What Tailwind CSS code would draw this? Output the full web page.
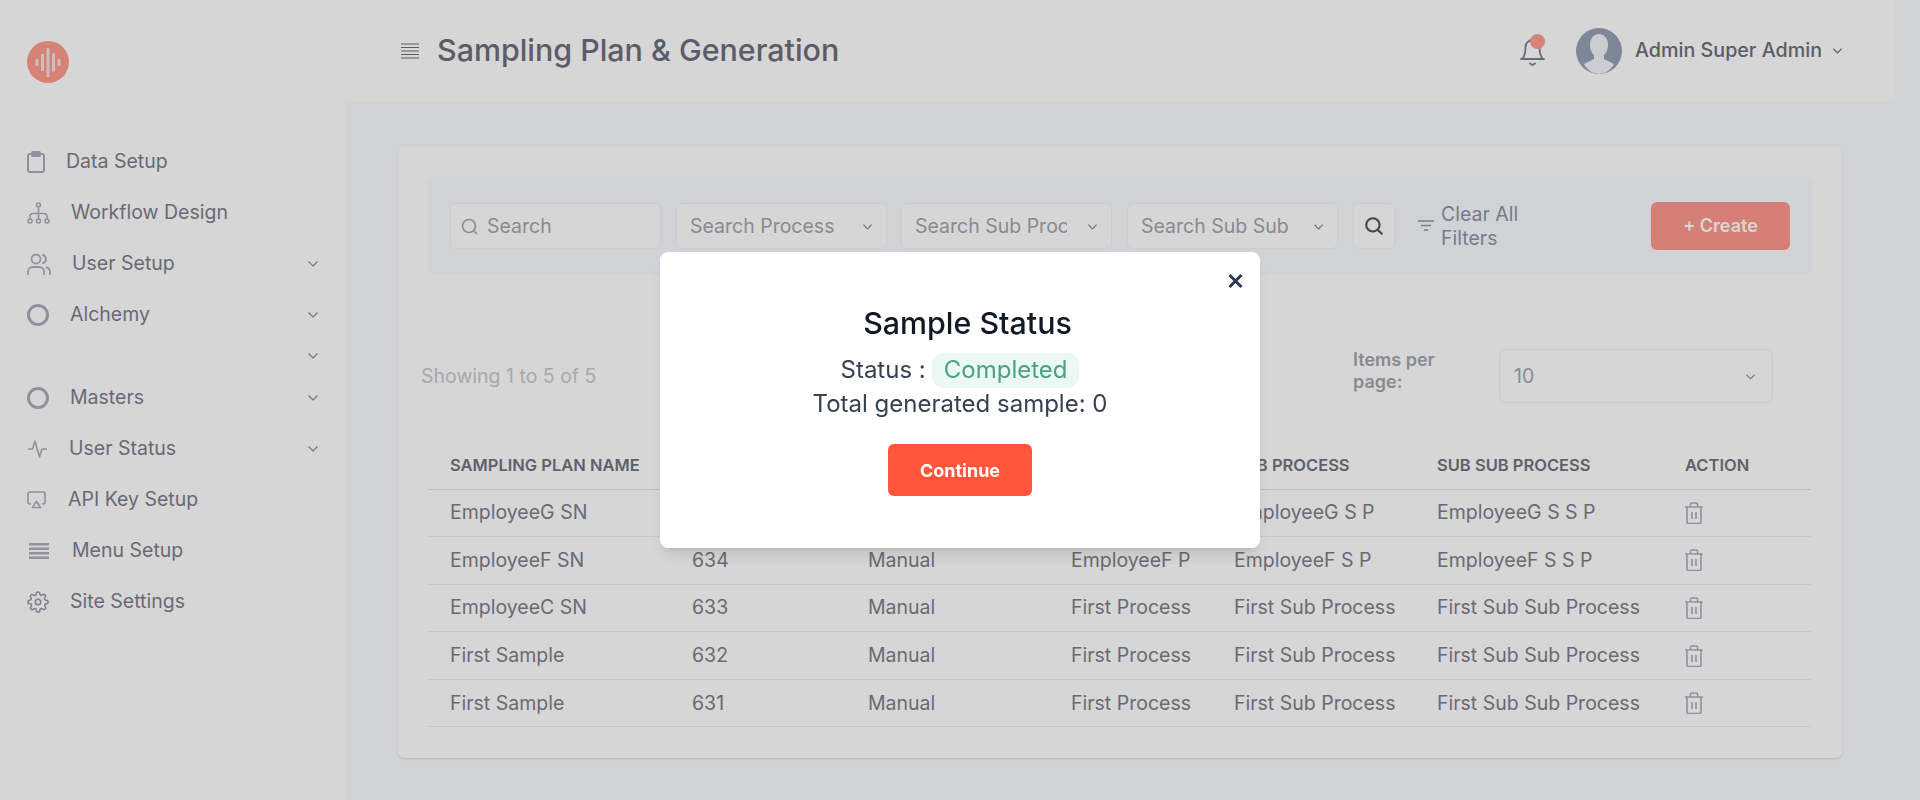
<!DOCTYPE html>
<html lang="en">
<head>
    <meta charset="UTF-8">
    <meta name="viewport" content="width=device-width, initial-scale=1.0">
    <title>Sampling Plan &amp; Generation</title>
    <script src="https://cdn.jsdelivr.net/npm/@tailwindcss/browser@4"></script>
</head>
<body class="font-[Inter,sans-serif] bg-[#f9fbff] h-screen overflow-hidden">

    <div class="flex h-[800px]">
        <!-- sidebar -->
        <aside class="w-[345px] shrink-0 bg-white pt-[41px] pl-[27px] pr-[27px] text-[19.5px] text-[#7e7e8c]">
            <div class="w-[42px] h-[42px] rounded-full bg-[#ff9b8d] flex items-center justify-center mb-[53px]">
                <svg width="26" height="29" viewBox="0 0 26 29" fill="none" stroke="#f2e4e0" stroke-width="3"><path d="M2 11v7M7.500 6v17M13 0v29M18.500 5.500v18M24 11v7"/></svg>
            </div>
            <nav>
                <a class="flex items-center gap-[21px] h-[51px]">
                    <svg class="shrink-0" width="18" height="22" viewBox="0 0 18 22" fill="none" stroke="#aeacbe" stroke-width="2" stroke-linejoin="round"><rect x="1" y="3" width="16" height="18" rx="2"/><rect x="5" y="1" width="8" height="4" rx="1"/></svg>
                    <span>Data Setup</span>
                </a>
                <a class="flex items-center gap-[21px] h-[51px]">
                    <svg class="shrink-0" width="23" height="22" viewBox="0 0 23 22" fill="none" stroke="#aeacbe" stroke-width="1.6"><circle cx="11.500" cy="3" r="2"/><circle cx="3" cy="19" r="2"/><circle cx="11.500" cy="19" r="2"/><circle cx="20" cy="19" r="2"/><path d="M11.500 5v12M3 17v-2.500a3 3 0 0 1 3-3h11a3 3 0 0 1 3 3V17"/></svg>
                    <span>Workflow Design</span>
                </a>
                <a class="flex items-center gap-[21px] h-[51px]">
                    <svg class="shrink-0" width="24" height="22" viewBox="0 0 24 22" fill="none" stroke="#aeacbe" stroke-width="1.8" stroke-linecap="round"><circle cx="9" cy="6" r="4.500"/><path d="M1 21v-2a5 5 0 0 1 5-5h6a5 5 0 0 1 5 5v2M16 1.800a4.500 4.500 0 0 1 0 8.400M19.500 14.300a5 5 0 0 1 3.500 4.700v2"/></svg>
                    <span>User Setup</span>
                    <svg class="ml-auto" width="10" height="6" viewBox="0 0 10 6" fill="none" stroke="#8a8a98" stroke-width="1.2"><path d="M.5.5 5 5 9.500.5"/></svg>
                </a>
                <a class="flex items-center gap-[21px] h-[51px]">
                    <svg class="shrink-0" width="22" height="22" viewBox="0 0 22 22" fill="none" stroke="#aeacbe" stroke-width="3"><circle cx="11" cy="11" r="9.500"/></svg>
                    <span>Alchemy</span>
                    <svg class="ml-auto" width="10" height="6" viewBox="0 0 10 6" fill="none" stroke="#8a8a98" stroke-width="1.2"><path d="M.5.5 5 5 9.500.5"/></svg>
                </a>
                <div class="flex items-center h-[32px]">
                    <svg class="ml-auto" width="10" height="6" viewBox="0 0 10 6" fill="none" stroke="#8a8a98" stroke-width="1.2"><path d="M.5.5 5 5 9.500.5"/></svg>
                </div>
                <a class="flex items-center gap-[21px] h-[51px]">
                    <svg class="shrink-0" width="22" height="22" viewBox="0 0 22 22" fill="none" stroke="#aeacbe" stroke-width="3"><circle cx="11" cy="11" r="9.500"/></svg>
                    <span>Masters</span>
                    <svg class="ml-auto" width="10" height="6" viewBox="0 0 10 6" fill="none" stroke="#8a8a98" stroke-width="1.2"><path d="M.5.5 5 5 9.500.5"/></svg>
                </a>
                <a class="flex items-center gap-[22px] h-[51px]">
                    <svg class="shrink-0 ml-[1px]" width="19" height="18" viewBox="0 0 19 18" fill="none" stroke="#aeacbe" stroke-width="1.600" stroke-linejoin="round"><path d="M0 9h4.500L7 1l4.500 16L14 9h5"/></svg>
                    <span>User Status</span>
                    <svg class="ml-auto" width="10" height="6" viewBox="0 0 10 6" fill="none" stroke="#8a8a98" stroke-width="1.2"><path d="M.5.5 5 5 9.500.5"/></svg>
                </a>
                <a class="flex items-center gap-[22px] h-[51px]">
                    <svg class="shrink-0" width="19" height="18" viewBox="0 0 19 18" fill="none" stroke="#aeacbe" stroke-width="1.600" stroke-linejoin="round"><path d="M4 13H3a2 2 0 0 1-2-2V3a2 2 0 0 1 2-2h13a2 2 0 0 1 2 2v8a2 2 0 0 1-2 2h-1"/><path d="m9.500 10.500 4 6h-8z"/></svg>
                    <span>API Key Setup</span>
                </a>
                <a class="flex items-center gap-[23px] h-[51px]">
                    <svg class="shrink-0 ml-[2px]" width="20" height="16" viewBox="0 0 20 16" fill="none" stroke="#aeacbe" stroke-width="2.400"><path d="M0 1.200h20M0 5.700h20M0 10.200h20M0 14.800h20"/></svg>
                    <span>Menu Setup</span>
                </a>
                <a class="flex items-center gap-[21px] h-[51px]">
                    <svg class="shrink-0" width="22" height="22" viewBox="0 0 24 24" fill="none" stroke="#9a98a8" stroke-width="1.700" stroke-linecap="round" stroke-linejoin="round"><circle cx="12" cy="12" r="3"/><path d="M19.400 15a1.650 1.650 0 0 0 .33 1.820l.06.06a2 2 0 1 1-2.830 2.830l-.06-.06a1.650 1.650 0 0 0-2.820 1.170V21a2 2 0 1 1-4 0v-.09A1.650 1.650 0 0 0 7.260 19.700l-.06.06a2 2 0 1 1-2.830-2.830l.06-.06A1.650 1.650 0 0 0 3.260 14H3a2 2 0 1 1 0-4h.09A1.650 1.650 0 0 0 4.300 7.260l-.06-.06a2 2 0 1 1 2.830-2.830l.06.06A1.650 1.650 0 0 0 10 3.260V3a2 2 0 1 1 4 0v.09a1.650 1.650 0 0 0 2.800 1.170l.06-.06a2 2 0 1 1 2.830 2.830l-.06.06A1.650 1.650 0 0 0 20.740 10H21a2 2 0 1 1 0 4h-.09a1.650 1.650 0 0 0-1.510 1z"/></svg>
                    <span>Site Settings</span>
                </a>
            </nav>
        </aside>

        <div class="flex-1 min-w-0">
            <!-- header -->
            <header class="h-[101px] w-[1550px] bg-white flex items-center pl-[56px] pr-[53px]">
                <svg class="mr-[18px]" width="18" height="16" viewBox="0 0 18 16" fill="none" stroke="#6e6e7c" stroke-width="1.200"><path d="M0 1h18M0 4.500h18M0 8h18M0 11.500h18M0 15h18"/></svg>
                <h1 class="text-[30.4px] font-medium text-[#6e6e7c]">Sampling Plan &amp; Generation</h1>
                <div class="ml-auto relative w-[25px] h-[31px] mr-[31px]">
                    <svg width="25" height="31" viewBox="0 0 25 31" fill="none" stroke="#7f7f8a" stroke-width="1.800" stroke-linecap="round"><path d="M3 23c2-3 2.500-6 2.500-11a7 7 0 0 1 14 0c0 5 .5 8 2.500 11M1 24h23M10 28.500l2.500 1.500 2.500-1.500"/></svg>
                    <span class="absolute left-[10px] -top-[1px] w-[15px] h-[15px] rounded-full bg-[#ff9b8d]"></span>
                </div>
                <svg class="rounded-full mr-[13px]" width="46" height="46" viewBox="0 0 46 46"><rect width="46" height="46" fill="#98a0b6"/><path d="M23 6c-6 0-9 5-9 11 0 4 1.500 8 4 10v4l-10 5c3 6 9 10 15 10s12-4 15-10l-10-5v-4c2.500-2 4-6 4-10 0-6-3-11-9-11z" fill="#f2f4f6"/></svg>
                <span class="text-[19.7px] font-medium text-[#6e6e7c]">Admin Super Admin</span>
                <svg class="ml-[11px]" width="9" height="6" viewBox="0 0 10 6" fill="none" stroke="#6e6e7c" stroke-width="1.300"><path d="M.5.5 5 5 9.500.5"/></svg>
            </header>

            <!-- card -->
            <main class="ml-[53px] mr-[78px] mt-[45px] h-[612px] bg-white rounded-md shadow-sm px-[30px] pt-[30px]">
                <div class="h-[99px] bg-[#f9fbff] rounded-md flex items-center pl-[22px] pr-[22px] text-[19.5px]">
                    <div class="relative w-[211px] h-[46px] shrink-0">
                        <svg class="absolute left-[11px] top-[15px]" width="17" height="17" viewBox="0 0 17 17" fill="none" stroke="#a8a8ae" stroke-width="1.700"><circle cx="8" cy="8" r="6.500"/><path d="m12.500 12.500 3.500 3.500"/></svg>
                        <input placeholder="Search" class="w-full h-full bg-white border border-[#f4f4f6] rounded-md pl-[36px] placeholder:text-[#a4a5ae] outline-none">
                    </div>
                    <div class="relative w-[211px] h-[46px] shrink-0 ml-[15px]">
                        <input placeholder="Search Process" class="w-full h-full bg-white border border-[#f4f4f6] rounded-md pl-[13px] pr-[44px] placeholder:text-[#a4a5ae] outline-none">
                        <svg class="absolute right-[15px] top-[21px]" width="9" height="6" viewBox="0 0 10 6" fill="none" stroke="#8a8a98" stroke-width="1.300"><path d="M.5.5 5 5 9.500.5"/></svg>
                    </div>
                    <div class="relative w-[211px] h-[46px] shrink-0 ml-[14px]">
                        <input placeholder="Search Sub Process" class="w-full h-full bg-white border border-[#f4f4f6] rounded-md pl-[13px] pr-[44px] placeholder:text-[#a4a5ae] outline-none">
                        <svg class="absolute right-[15px] top-[21px]" width="9" height="6" viewBox="0 0 10 6" fill="none" stroke="#8a8a98" stroke-width="1.300"><path d="M.5.5 5 5 9.500.5"/></svg>
                    </div>
                    <div class="relative w-[211px] h-[46px] shrink-0 ml-[15px]">
                        <input placeholder="Search Sub Sub Process" class="w-full h-full bg-white border border-[#f4f4f6] rounded-md pl-[13px] pr-[44px] placeholder:text-[#a4a5ae] outline-none">
                        <svg class="absolute right-[15px] top-[21px]" width="9" height="6" viewBox="0 0 10 6" fill="none" stroke="#8a8a98" stroke-width="1.300"><path d="M.5.5 5 5 9.500.5"/></svg>
                    </div>
                    <button class="w-[42px] h-[46px] shrink-0 ml-[15px] bg-white border border-[#f4f4f6] rounded-md flex items-center justify-center">
                        <svg width="20" height="20" viewBox="0 0 18 18" fill="none" stroke="#4b5563" stroke-width="1.900"><circle cx="8" cy="8" r="6"/><path d="m12.500 12.500 4 4"/></svg>
                    </button>
                    <svg class="ml-[23px] shrink-0" width="16" height="11" viewBox="0 0 16 11" fill="none" stroke="#8b93a8" stroke-width="1.600"><path d="M0 1h16M3 5.500h10M6 10h4"/></svg>
                    <span class="ml-[7px] w-[100px] leading-[24px] text-[#8b93a8]">Clear All Filters</span>
                    <button class="ml-auto w-[139px] h-[48px] bg-[#ff988d] rounded-md text-[18px] font-semibold text-white">+ Create</button>
                </div>

                <div class="flex items-center h-[54px] mt-[74px] -ml-[7px]">
                    <span class="w-[932px] pt-[2px] text-[19.5px] text-[#c9c9cf]">Showing 1 to 5 of 5</span>
                    <span class="w-[146px] pb-[10px] text-[18px] font-semibold leading-[22px] text-[#a4a5ae] pr-[50px]">Items per page:</span>
                    <div class="relative w-[274px] h-[54px] bg-white border border-[#f4f4f6] rounded-md flex items-center pl-[14px] pt-[2px] text-[19.5px] text-[#a4a5ae]">
                        10
                        <svg class="absolute right-[17px] top-[24px]" width="9" height="6" viewBox="0 0 10 6" fill="none" stroke="#8a8a98" stroke-width="1.200"><path d="M.5.5 5 5 9.500.5"/></svg>
                    </div>
                </div>

                <table class="mt-[38px] w-[1383px] table-fixed text-left text-[19.5px] text-[#7e7e8c]">
                    <colgroup>
                        <col class="w-[242px]"><col class="w-[176px]"><col class="w-[203px]"><col class="w-[163px]"><col class="w-[203px]"><col class="w-[248px]"><col>
                    </colgroup>
                    <thead class="text-[16.5px] uppercase text-[#73737f]">
                        <tr class="h-[48px] border-b border-[#dfe1e5]">
                            <th class="pl-[22px] pt-[1px] font-semibold">Sampling Plan Name</th>
                            <th class="pl-[22px] pt-[1px] font-semibold">Sample ID</th>
                            <th class="pl-[22px] pt-[1px] font-semibold">Type</th>
                            <th class="pl-[22px] pt-[1px] font-semibold">Process</th>
                            <th class="pl-[22px] pt-[1px] font-semibold">Sub Process</th>
                            <th class="pl-[22px] pt-[1px] font-semibold">Sub Sub Process</th>
                            <th class="pl-[22px] pt-[1px] font-semibold">Action</th>
                        </tr>
                    </thead>
                    <tbody>
                        <tr class="h-[47.6px] border-b border-[#eceef2]">
                            <td class="pl-[22px]">EmployeeG SN</td><td class="pl-[22px]">635</td><td class="pl-[22px]">Manual</td><td class="pl-[22px]">EmployeeG P</td><td class="pl-[22px]">EmployeeG S P</td><td class="pl-[22px]">EmployeeG S S P</td>
                            <td class="pl-[22px]"><svg width="18" height="22" viewBox="0 0 18 22" fill="none" stroke="#aeacbe" stroke-width="1.600" stroke-linejoin="round"><path d="M0 5h18M2 5v15a1.500 1.500 0 0 0 1.500 1.500h11A1.500 1.500 0 0 0 16 20V5M5.500 5V2a1 1 0 0 1 1-1h5a1 1 0 0 1 1 1v3M7 10v7M11 10v7"/></svg></td>
                        </tr>
                        <tr class="h-[47.6px] border-b border-[#eceef2]">
                            <td class="pl-[22px]">EmployeeF SN</td><td class="pl-[22px]">634</td><td class="pl-[22px]">Manual</td><td class="pl-[22px]">EmployeeF P</td><td class="pl-[22px]">EmployeeF S P</td><td class="pl-[22px]">EmployeeF S S P</td>
                            <td class="pl-[22px]"><svg width="18" height="22" viewBox="0 0 18 22" fill="none" stroke="#aeacbe" stroke-width="1.600" stroke-linejoin="round"><path d="M0 5h18M2 5v15a1.500 1.500 0 0 0 1.500 1.500h11A1.500 1.500 0 0 0 16 20V5M5.500 5V2a1 1 0 0 1 1-1h5a1 1 0 0 1 1 1v3M7 10v7M11 10v7"/></svg></td>
                        </tr>
                        <tr class="h-[47.6px] border-b border-[#eceef2]">
                            <td class="pl-[22px]">EmployeeC SN</td><td class="pl-[22px]">633</td><td class="pl-[22px]">Manual</td><td class="pl-[22px]">First Process</td><td class="pl-[22px]">First Sub Process</td><td class="pl-[22px]">First Sub Sub Process</td>
                            <td class="pl-[22px]"><svg width="18" height="22" viewBox="0 0 18 22" fill="none" stroke="#aeacbe" stroke-width="1.600" stroke-linejoin="round"><path d="M0 5h18M2 5v15a1.500 1.500 0 0 0 1.500 1.500h11A1.500 1.500 0 0 0 16 20V5M5.500 5V2a1 1 0 0 1 1-1h5a1 1 0 0 1 1 1v3M7 10v7M11 10v7"/></svg></td>
                        </tr>
                        <tr class="h-[47.6px] border-b border-[#eceef2]">
                            <td class="pl-[22px]">First Sample</td><td class="pl-[22px]">632</td><td class="pl-[22px]">Manual</td><td class="pl-[22px]">First Process</td><td class="pl-[22px]">First Sub Process</td><td class="pl-[22px]">First Sub Sub Process</td>
                            <td class="pl-[22px]"><svg width="18" height="22" viewBox="0 0 18 22" fill="none" stroke="#aeacbe" stroke-width="1.600" stroke-linejoin="round"><path d="M0 5h18M2 5v15a1.500 1.500 0 0 0 1.500 1.500h11A1.500 1.500 0 0 0 16 20V5M5.500 5V2a1 1 0 0 1 1-1h5a1 1 0 0 1 1 1v3M7 10v7M11 10v7"/></svg></td>
                        </tr>
                        <tr class="h-[47.6px] border-b border-[#eceef2]">
                            <td class="pl-[22px]">First Sample</td><td class="pl-[22px]">631</td><td class="pl-[22px]">Manual</td><td class="pl-[22px]">First Process</td><td class="pl-[22px]">First Sub Process</td><td class="pl-[22px]">First Sub Sub Process</td>
                            <td class="pl-[22px]"><svg width="18" height="22" viewBox="0 0 18 22" fill="none" stroke="#aeacbe" stroke-width="1.600" stroke-linejoin="round"><path d="M0 5h18M2 5v15a1.500 1.500 0 0 0 1.500 1.500h11A1.500 1.500 0 0 0 16 20V5M5.500 5V2a1 1 0 0 1 1-1h5a1 1 0 0 1 1 1v3M7 10v7M11 10v7"/></svg></td>
                        </tr>
                    </tbody>
                </table>
            </main>
        </div>
    </div>

    <!-- modal -->
    <div class="fixed inset-0 bg-black/16 flex justify-center pt-[252px]">
        <div class="relative w-[600px] h-[296px] bg-white rounded-lg shadow-lg flex flex-col items-center pt-[52px]">
            <svg class="absolute right-[17px] top-[22px]" width="15" height="14" viewBox="0 0 15 14" fill="none" stroke="#2f3a4c" stroke-width="3"><path d="M1.500 1l12 12M13.500 1l-12 12"/></svg>
            <h2 class="text-[30.4px] leading-[38px] font-medium text-[#111827] pl-[15px]">Sample Status</h2>
            <div class="flex items-center mt-[10px] text-[24px] text-[#374151]">
                <span>Status :</span>
                <span class="ml-[6px] h-[35px] px-[12px] flex items-center rounded-xl bg-[#ecf8f3] text-[#4aa37f]">Completed</span>
            </div>
            <p class="text-[24px] leading-[32px] text-[#374151]">Total generated sample: 0</p>
            <button class="mt-[24px] w-[144px] h-[52px] bg-[#ff5539] rounded-md text-[18px] font-bold text-white">Continue</button>
        </div>
    </div>

</body>
</html>
